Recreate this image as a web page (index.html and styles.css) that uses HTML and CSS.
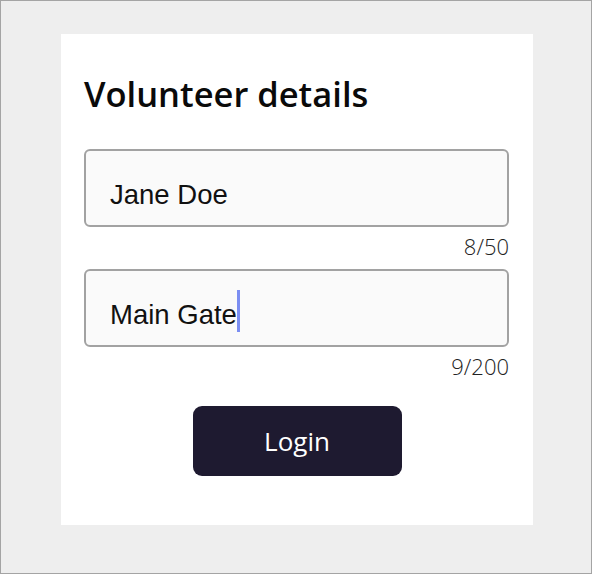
FILE: index.html
```html
<!DOCTYPE html>
<html lang="en">
<head>
<meta charset="utf-8">
<title>Volunteer details</title>
<link rel="stylesheet" href="styles.css">
</head>
<body>
<div class="frame">
  <form class="card">
    <h1 class="title">Volunteer details</h1>
    <div class="field">
      <div class="input" role="textbox">Jane Doe</div>
      <div class="counter">8/50</div>
    </div>
    <div class="field">
      <div class="input" role="textbox">Main Gate<span class="caret"></span></div>
      <div class="counter">9/200</div>
    </div>
    <div class="actions">
      <button type="button" class="btn">Login</button>
    </div>
  </form>
</div>
</body>
</html>
```
FILE: styles.css
```css
* { box-sizing: border-box; }
html, body { margin: 0; padding: 0; }
body { font-family: "Open Sans", "Liberation Sans", sans-serif; }
.frame {
  width: 592px;
  height: 574px;
  border: 1px solid #a4a4a4;
  background: #eeeeee;
  padding: 33px 0 0 60px;
}
.card {
  width: 472px;
  height: 491px;
  background: #ffffff;
  padding: 40px 24px 0 24px;
  display: flex;
  flex-direction: column;
}
.title {
  margin: 0 0 35px -1px;
  font-size: 34.5px;
  line-height: 40px;
  font-weight: 650;
  color: #0a0a0a;
}
.field { display: flex; flex-direction: column; margin-bottom: 8px; }
.input {
  height: 78px;
  margin-left: -1px;
  border: 2px solid #a2a2a2;
  border-radius: 6px;
  background: #fafafa;
  padding: 24px 24px 0 24px;
  font-family: "Liberation Sans", Arial, sans-serif;
  font-size: 27.5px;
  line-height: 40px;
  color: #111;
  white-space: nowrap;
  overflow: hidden;
}
.caret {
  display: inline-block;
  width: 3px;
  height: 42px;
  margin-top: -6px;
  background: #7b8ef2;
  vertical-align: -8px;
}
.counter {
  text-align: right;
  margin-top: 4px;
  font-size: 22px;
  line-height: 30px;
  font-weight: 300;
  color: #222;
}
.actions { display: flex; justify-content: center; margin-top: 17px; }
.btn {
  width: 209px;
  height: 70px;
  border: none;
  border-radius: 9px;
  background: #1e1a30;
  color: #fff;
  font-family: "Open Sans", sans-serif;
  font-size: 26px;
  padding: 0;
}
```
